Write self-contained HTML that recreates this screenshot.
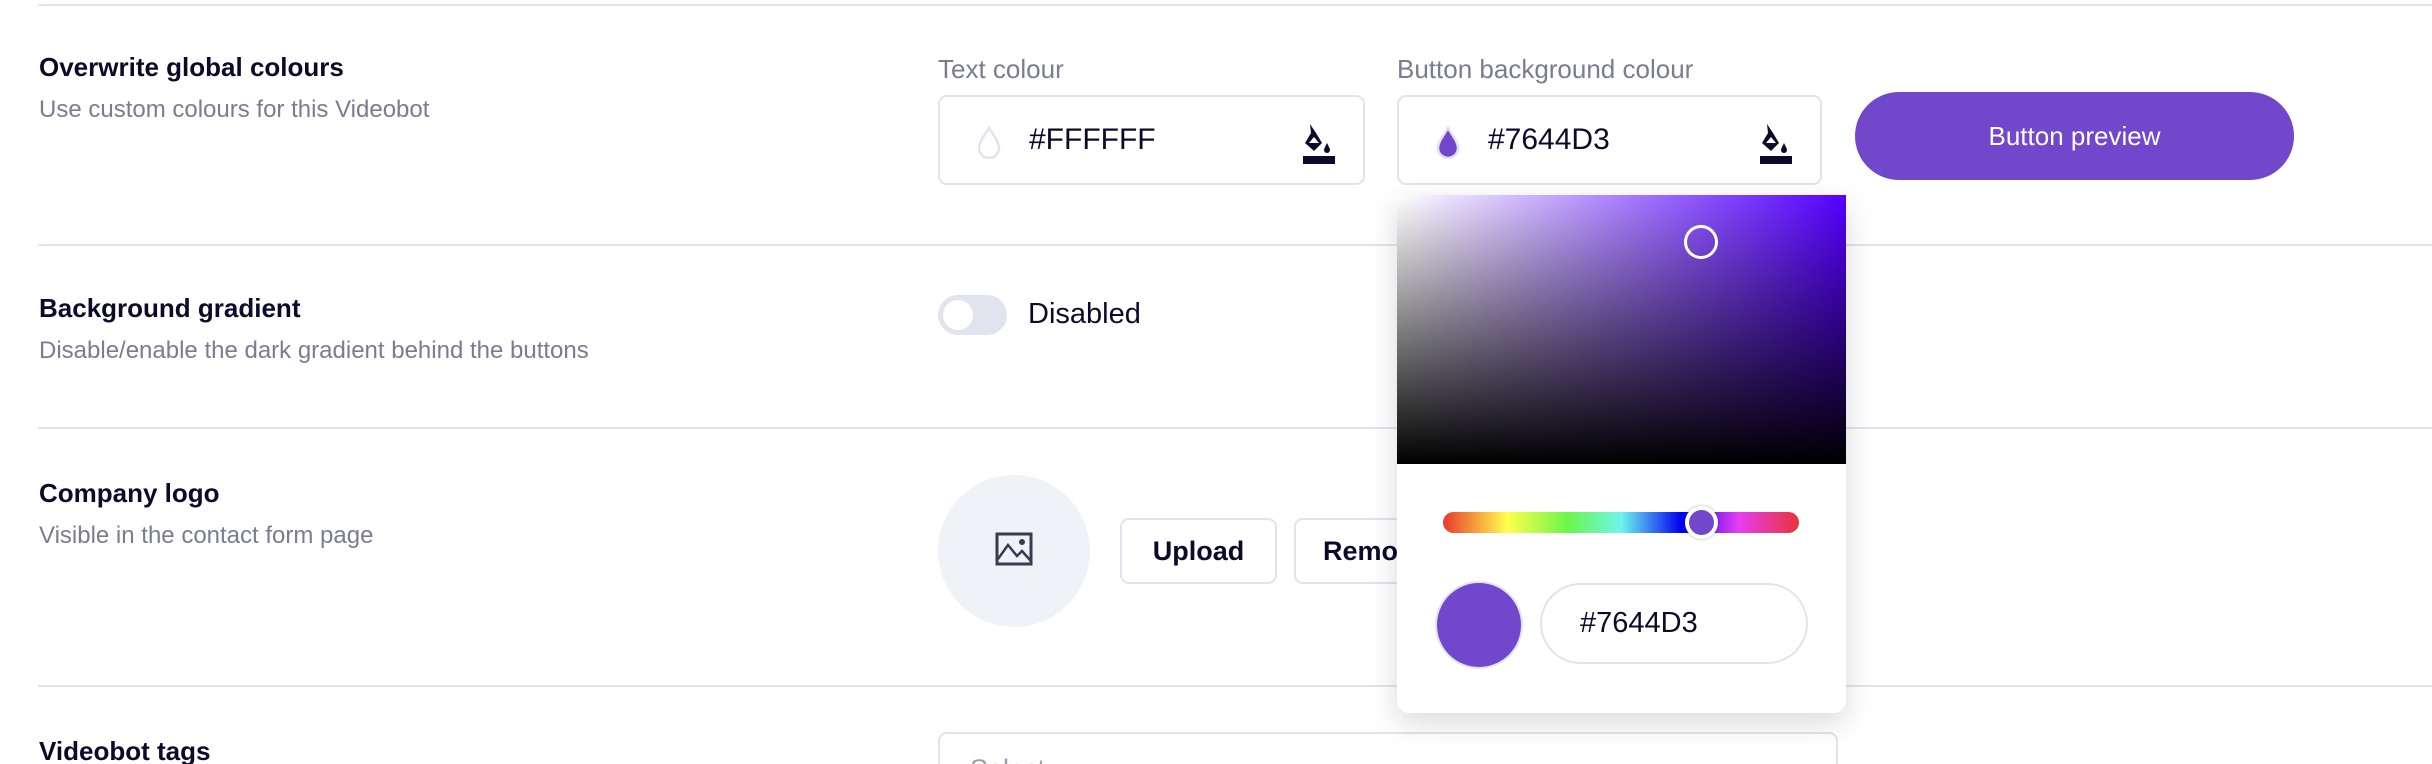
<!DOCTYPE html>
<html style="width:2432px;height:764px;overflow:hidden"><head><style>
*{box-sizing:border-box;margin:0;padding:0}
body{width:2432px;height:764px;background:#fff;position:relative;overflow:hidden;font-family:"Liberation Sans",sans-serif;color:#0b0a2a}
.a{position:absolute}
.hr{position:absolute;left:38px;right:0;height:2px;background:#e1e4ee}
.h{position:absolute;left:39px;font-weight:bold;font-size:26px;color:#0b0a2a}
.s{position:absolute;left:39px;font-size:24px;color:#7a7c92}
.lbl{font-size:26px;color:#7a7c92}
.inp{border:2px solid #e1e4ee;border-radius:9px;background:#fff}
.btn{border:2px solid #e1e4ee;border-radius:9px;background:#fff;font-weight:bold;font-size:27px;display:flex;align-items:center;justify-content:center}
</style></head><body>
<div class="hr" style="top:4px"></div>
<div class="h" style="top:52px">Overwrite global colours</div>
<div class="s" style="top:96px">Use custom colours for this Videobot</div>
<div class="hr" style="top:244px"></div>
<div class="h" style="top:293px">Background gradient</div>
<div class="s" style="top:337px">Disable/enable the dark gradient behind the buttons</div>
<div class="hr" style="top:427px"></div>
<div class="h" style="top:478px">Company logo</div>
<div class="s" style="top:522px">Visible in the contact form page</div>
<div class="hr" style="top:685px"></div>
<div class="h" style="top:736px">Videobot tags</div>

<div class="a lbl" style="left:938px;top:54px">Text colour</div>
<div class="a lbl" style="left:1397px;top:54px">Button background colour</div>

<div class="a inp" style="left:938px;top:95px;width:427px;height:90px">
 <svg class="a" style="left:34px;top:28px" width="30" height="34" viewBox="0 0 30 34"><path d="M15 3 C10 11 5 17 5 23 a10 10 0 0 0 20 0 C25 17 20 11 15 3Z" fill="#fff" stroke="#e1e4ee" stroke-width="2.5"/></svg>
 <div class="a" style="left:89px;top:26px;font-size:30px">#FFFFFF</div>
 <svg class="a" style="left:360px;top:24px" width="36" height="44" viewBox="0 0 36 44"><path d="M10 3 L16 12 L22 22 L14 30 L5 22 L11 12Z" fill="#0b0a2a"/><path d="M9 22 L14 16 L19 22Z" fill="#fff"/><path d="M27 22 C25 26 24 28 24 29 a3 3 0 0 0 6 0 C30 28 29 26 27 22Z" fill="#0b0a2a"/><rect x="3" y="35" width="32" height="8" fill="#0b0a2a"/></svg>
</div>
<div class="a inp" style="left:1397px;top:95px;width:425px;height:90px">
 <svg class="a" style="left:34px;top:28px" width="30" height="34" viewBox="0 0 30 34"><path d="M15 3 C10 11 5 17 5 23 a10 10 0 0 0 20 0 C25 17 20 11 15 3Z" fill="#7147cb" stroke="#e1e4ee" stroke-width="2.5"/></svg>
 <div class="a" style="left:89px;top:26px;font-size:30px">#7644D3</div>
 <svg class="a" style="left:358px;top:24px" width="36" height="44" viewBox="0 0 36 44"><path d="M10 3 L16 12 L22 22 L14 30 L5 22 L11 12Z" fill="#0b0a2a"/><path d="M9 22 L14 16 L19 22Z" fill="#fff"/><path d="M27 22 C25 26 24 28 24 29 a3 3 0 0 0 6 0 C30 28 29 26 27 22Z" fill="#0b0a2a"/><rect x="3" y="35" width="32" height="8" fill="#0b0a2a"/></svg>
</div>
<div class="a" style="left:1855px;top:92px;width:439px;height:88px;border-radius:44px;background:#7147cb;color:#fff;font-size:26px;display:flex;align-items:center;justify-content:center">Button preview</div>

<div class="a" style="left:938px;top:295px;width:69px;height:40px;border-radius:20px;background:#e1e4ee"><div class="a" style="left:5px;top:5px;width:30px;height:30px;border-radius:50%;background:#fff"></div></div>
<div class="a" style="left:1028px;top:298px;font-size:29px">Disabled</div>

<div class="a" style="left:938px;top:475px;width:152px;height:152px;border-radius:50%;background:#eff2f7">
 <svg class="a" style="left:57px;top:57px" width="38" height="34" viewBox="0 0 38 34"><rect x="2" y="2" width="34" height="30" fill="none" stroke="#3a3a52" stroke-width="3"/><path d="M3 27 L13 13 L22 24 L27 19 L35 28" fill="none" stroke="#3a3a52" stroke-width="2.5"/><circle cx="27" cy="10" r="3" fill="#3a3a52"/></svg>
</div>
<div class="a btn" style="left:1120px;top:518px;width:157px;height:66px">Upload</div>
<div class="a btn" style="left:1294px;top:518px;width:160px;height:66px;justify-content:flex-start;padding-left:27px">Remove</div>

<div class="a" style="left:938px;top:732px;width:900px;height:32px;overflow:hidden"><div class="a inp" style="left:0;top:0;width:900px;height:70px"><div class="a" style="left:30px;top:20px;font-size:27px;color:#9a9cae">Select</div></div></div>

<div class="a" style="left:1397px;top:195px;width:449px;height:518px;background:#fff;border-radius:0 0 12px 12px;box-shadow:0 10px 30px rgba(0,0,0,0.15)">
 <div class="a" style="left:0;top:0;width:449px;height:269px;background:linear-gradient(to top,#000,rgba(0,0,0,0)),linear-gradient(to right,#fff,#5500ff)"></div>
 <div class="a" style="left:287px;top:30px;width:34px;height:34px;border-radius:50%;border:3px solid #fff"></div>
 <div class="a" style="left:46px;top:317px;width:356px;height:21px;border-radius:11px;background:linear-gradient(to right,#e83a2c,#ffff4c 18%,#6cf54b 35%,#6ef5ee 50%,#0000f0 67%,#e83cf2 83%,#e8333a)"></div>
 <div class="a" style="left:288px;top:311px;width:33px;height:33px;border-radius:50%;background:#7147cb;border:4px solid #fff;box-shadow:0 0 3px rgba(0,0,0,.3)"></div>
 <div class="a" style="left:38px;top:386px;width:88px;height:88px;border-radius:50%;background:#7147cb;border:2px solid #e1e4ee"></div>
 <div class="a" style="left:143px;top:388px;width:268px;height:81px;border-radius:41px;border:2px solid #e1e4ee;font-size:29px;padding:22px 0 0 38px">#7644D3</div>
</div>
</body></html>
